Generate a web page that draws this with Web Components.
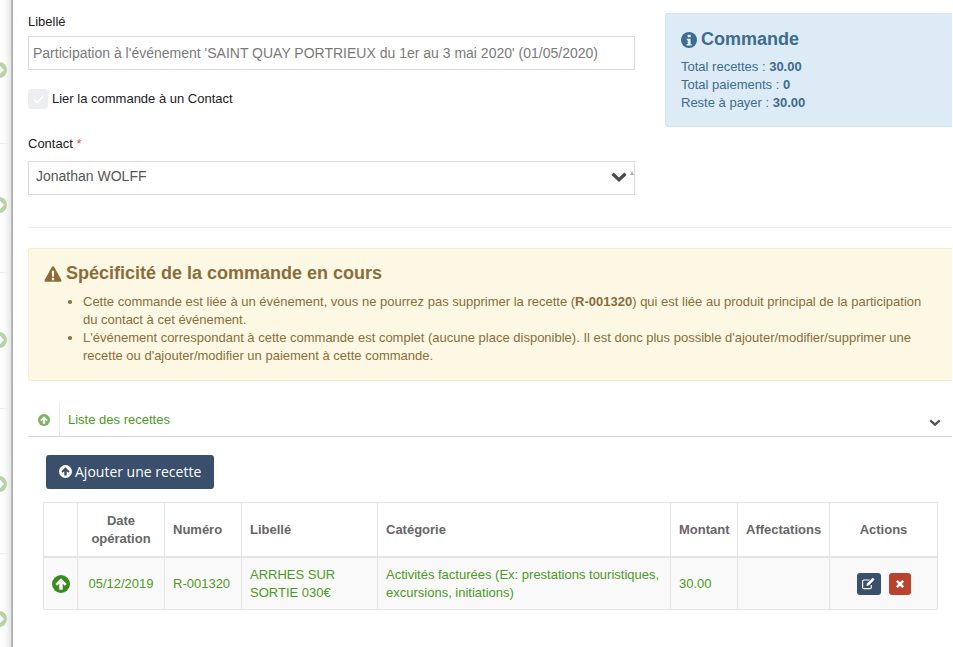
<!DOCTYPE html>
<html>
<head>
<meta charset="utf-8">
<title>Commande</title>
<style>
html, body { margin:0; height:100%; background:#fff; overflow:hidden; }
body { font-family:"Liberation Sans", Arial, sans-serif; font-size:13px; color:#333; }
</style>
</head>
<body>
<order-page></order-page>

<script>
	const ICONS = {
		info:'<svg viewBox="0 0 24 24" width="100%" height="100%"><circle cx="12" cy="12" r="12" fill="currentColor"/><rect x="10" y="4" width="4.6" height="4" rx="1" fill="var(--ic,#fff)"/><path d="M8.6 10h5.8v8h1.6v2.4H8.400V18h1.700v-5.600H8.600z" fill="var(--ic,#fff)"/></svg>',
		warn:'<svg viewBox="0 0 24 22" width="100%" height="100%"><path d="M12 .5c.8 0 1.400.4 1.800 1.100l9.600 17.200c.7 1.400-.2 2.900-1.800 2.900H2.400C.8 21.700-.1 20.200.6 18.800L10.200 1.600C10.600.9 11.200.5 12 .5z" fill="currentColor"/><path d="M10.300 6.600h3.400l-.5 8.200h-2.400zM10.500 16.300h3v3.200h-3z" fill="var(--ic,#fcf8e3)"/></svg>',
		up:'<svg viewBox="0 0 24 24" width="100%" height="100%"><circle cx="12" cy="12" r="12" fill="currentColor"/><path d="M12 4.300l7.600 7.600-2.500 2.500-2.800-2.800v7.900H9.700v-7.900l-2.800 2.800-2.500-2.500z" fill="var(--ic,#fff)"/></svg>',
		chevron:'<svg viewBox="0 0 16 11" width="100%" height="100%"><path d="M1.500 3.200L8 9.200l6.500-6" fill="none" stroke="currentColor" stroke-width="3.200"/></svg>',
		edit:'<svg viewBox="0 0 16 14" width="100%" height="100%"><path d="M11 8.500v2.700c0 .8-.6 1.300-1.300 1.300H3c-.8 0-1.300-.6-1.300-1.300V4.500c0-.8.600-1.300 1.300-1.300h6" fill="none" stroke="#fff" stroke-width="1.200"/><path d="M12.600 .8l2 2L8.500 9l-2.700.6.6-2.700z" fill="#fff"/></svg>',
		times:'<svg viewBox="0 0 12 12" width="100%" height="100%"><path d="M2.200 2.200l7.600 7.600M9.800 2.200l-7.600 7.600" stroke="#fff" stroke-width="3" fill="none"/></svg>'
	}

	function define(name, css, html) {
		customElements.define(name, class extends HTMLElement {
			constructor() {
				super()
				this.attachShadow({mode:'open'}).innerHTML = '<style>' + css + '</style>' + (typeof html == 'function' ? html(this) : html)
			}
		})
	}

	define('ui-icon', ':host{display:inline-block;line-height:0;flex:none}', el => ICONS[el.getAttribute('name')])

	// strip of the page behind the panel, only a few pixels stay visible
	define('side-strip', `
		:host { display:block; position:relative; width:11px; flex:none; background:linear-gradient(90deg,#fff,#fafafa 50%,#e6e6e6); overflow:hidden; border-right:2px solid #b4b4b4; }
		i { position:absolute; left:-9px; width:16px; height:16px; color:#b7d2a4; transform:rotate(90deg); }
		b { position:absolute; left:0; right:0; height:1px; background:#efefef; }
	`, () => [70,205,340,484,619].map(y => '<i style="top:'+(y-8)+'px"><ui-icon name="up" style="width:16px;height:16px;--ic:#fbfbfb"></ui-icon></i>').join('')
		+ [143,272,408,553].map(y => '<b style="top:'+y+'px"></b>').join(''))

	define('form-field', `
		:host { display:block; }
		label { display:block; font-size:13px; line-height:15px; color:#222; }
		em { color:#d9534f; font-style:normal; }
		.box { box-sizing:border-box; display:flex; align-items:center; position:relative; height:34px; margin-top:7px; border:1px solid #dcdcdc; background:#fff; }
		:host([disabled]) .box { color:#7a7a7a; padding:0 4px; font-size:14px; }
		:host([select]) .box { color:#555; padding:0 7px 5px; font-size:14px; margin-top:10px; }
		::slotted(ui-icon) { position:absolute; right:7px; top:8px; width:16px; height:12px; color:#4a4a4a; }
		.up { position:absolute; right:0; top:9px; border:2.500px solid transparent; border-top:0; border-bottom:4px solid #aaa; }
		:host(:not([select])) .up { display:none; }
	`, el => '<label>' + el.getAttribute('label') + (el.hasAttribute('required') ? ' <em>*</em>' : '') + '</label><div class="box"><slot></slot><span class="up"></span></div>')

	define('check-line', `
		:host { display:flex; align-items:center; gap:4px; font-size:13px; color:#222; }
		span { width:20px; height:20px; border-radius:4px; background:#eceef0; display:flex; align-items:center; justify-content:center; }
		slot { display:block; padding-bottom:2px; }
	`, '<span><svg viewBox="0 0 12 10" width="11" height="9"><path d="M1 5l3.500 3.500L11 1.500" fill="none" stroke="#fff" stroke-width="1.800"/></svg></span><slot></slot>')

	define('alert-box', `
		:host { display:block; box-sizing:border-box; border:1px solid; border-right:0; border-radius:3px 0 0 3px; }
		:host([kind=info]) { background:#dcebf6; border-color:#d3e6f3; color:#3d6c8e; --ic:#dcebf6; padding:15px 15px 14px; height:114px; --gap:8px; }
		:host([kind=warn]) { background:#fcf8e3; border-color:#f6eed0; color:#8a6d3b; --ic:#fcf8e3; padding:14px 15px 15px; height:133px; --gap:9px; }
		h4 { margin:0; display:flex; align-items:center; gap:4px; font-size:18px; line-height:21px; font-weight:bold; }
		ui-icon { width:16px; height:16px; }
		:host([kind=warn]) ui-icon { width:18px; height:16px; }
		.body { font-size:13px; line-height:18px; margin-top:var(--gap); }
	`, el => '<h4><ui-icon name="' + el.getAttribute('kind') + '"></ui-icon>' + el.getAttribute('heading') + '</h4><div class="body"><slot></slot></div>')

	define('panel-head', `
		:host { display:flex; align-items:stretch; box-sizing:border-box; height:35px; border-bottom:1px solid #d6d6d6; color:#4b9a26; font-size:13px; }
		.ic { width:32px; display:flex; align-items:center; justify-content:center; border-right:1px solid #eaeaea; padding-top:2px; box-sizing:border-box; }
		.ic ui-icon { width:12px; height:12px; color:#7cb35f; }
		.t { flex:1; padding:0 0 0 8px; display:flex; align-items:center; }
		.ch { width:12px; height:8px; margin:5px 11px 0 0; align-self:center; color:#555; }
	`, '<div class="ic"><ui-icon name="up"></ui-icon></div><div class="t"><slot></slot></div><ui-icon class="ch" name="chevron"></ui-icon>')

	define('app-button', `
		:host { display:inline-flex; align-items:center; justify-content:center; gap:3px; box-sizing:border-box; background:#3a4f6b; color:#fff; border-radius:3px; }
		:host([big]) { height:34px; padding:0 13px 2px; font:14px "Open Sans", sans-serif; }
		:host([big]) ui-icon { width:13px; height:13px; color:#fff; --ic:#3a4f6b; }
		:host([small]) { width:24px; height:22px; }
		:host([small]) ui-icon { width:15px; height:13px; }
		:host([danger]) { background:#b8432f; width:22px; }
		:host([danger]) ui-icon { width:10px; height:10px; }
	`, el => '<ui-icon name="' + el.getAttribute('icon') + '"></ui-icon><slot></slot>')

	define('recettes-table', `
		:host { display:block; }
		table { border-collapse:collapse; width:894px; table-layout:fixed; font-size:13px; }
		th, td { border:1px solid #e4e4e4; padding:0 8px; text-align:left; }
		th { height:52px; color:#666; font-size:13px; line-height:18px; border-bottom-width:2px; padding-top:1px; }
		td { height:51px; color:#4b9a26; background:#f9f9f9; line-height:18px; }
		.c { text-align:center; }
		ui-icon.up { width:18px; height:18px; color:#3c8a1e; --ic:#f9f9f9; display:block; margin:0 auto; }
		.act { display:flex; gap:8px; justify-content:center; }
	`, `<table>
		<colgroup><col style="width:34px"><col style="width:87px"><col style="width:77px"><col style="width:136px"><col style="width:293px"><col style="width:67px"><col style="width:92px"><col style="width:108px"></colgroup>
		<tr><th></th><th class="c">Date opération</th><th>Numéro</th><th>Libellé</th><th>Catégorie</th><th>Montant</th><th>Affectations</th><th class="c">Actions</th></tr>
		<tr><td><ui-icon class="up" name="up"></ui-icon></td><td class="c">05/12/2019</td><td>R-001320</td><td>ARRHES SUR SORTIE 030€</td><td>Activités facturées (Ex: prestations touristiques, excursions, initiations)</td><td>30.00</td><td></td><td><div class="act"><app-button small icon="edit"></app-button><app-button small danger icon="times"></app-button></div></td></tr>
	</table>`)

	define('order-page', `
		:host { display:flex; height:647px; }
		main { flex:1; min-width:0; padding:14px 1px 0 15px; }
		.top { display:grid; grid-template-columns:607px 287px; column-gap:30px; height:214px; border-bottom:1px solid #eee; box-sizing:border-box; }
		.form { display:flex; flex-direction:column; }
		.summary { margin-top:-1px; }
		check-line { margin:19px 0 0; }
		.contact { margin-top:27px; }
		alert-box[kind=warn] { margin-top:20px; }
		panel-head { margin-top:21px; }
		.btn { margin:18px 0 13px 18px; height:34px; }
		recettes-table { margin-left:15px; }
		ul { margin:0; padding:0 12px 0 39px; }
		b { font-weight:bold; }
	`, `<side-strip></side-strip>
	<main>
		<div class="top">
			<div class="form">
				<form-field label="Libellé" disabled>Participation à l'événement 'SAINT QUAY PORTRIEUX du 1er au 3 mai 2020' (01/05/2020)</form-field>
				<check-line>Lier la commande à un Contact</check-line>
				<form-field class="contact" label="Contact" required select>Jonathan WOLFF<ui-icon name="chevron"></ui-icon></form-field>
			</div>
			<alert-box class="summary" kind="info" heading="Commande">
				Total recettes : <b>30.00</b><br>Total paiements : <b>0</b><br>Reste à payer : <b>30.00</b>
			</alert-box>
		</div>
		<alert-box kind="warn" heading="Spécificité de la commande en cours">
			<ul>
				<li>Cette commande est liée à un événement, vous ne pourrez pas supprimer la recette (<b>R-001320</b>) qui est liée au produit principal de la participation du contact à cet événement.</li>
				<li>L'événement correspondant à cette commande est complet (aucune place disponible). Il est donc plus possible d'ajouter/modifier/supprimer une recette ou d'ajouter/modifier un paiement à cette commande.</li>
			</ul>
		</alert-box>
		<panel-head>Liste des recettes</panel-head>
		<div class="btn"><app-button big icon="up">Ajouter une recette</app-button></div>
		<recettes-table></recettes-table>
	</main>`)
</script>
</body>
</html>
